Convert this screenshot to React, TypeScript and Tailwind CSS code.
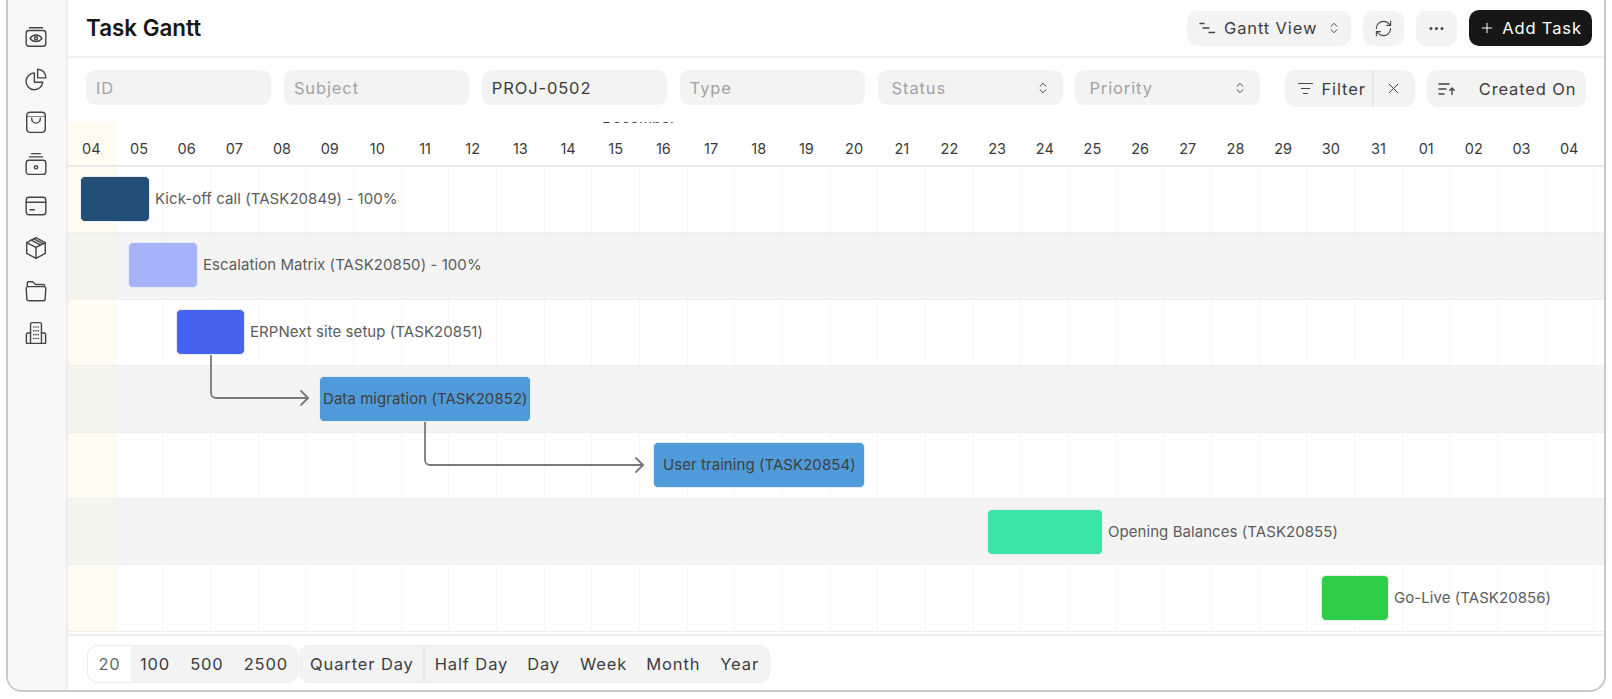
import { ChevronsUpDown, RefreshCw, Ellipsis, Plus, X, ListFilter } from 'lucide-react';

const dates = ['04','05','06','07','08','09','10','11','12','13','14','15','16','17','18','19','20','21','22','23','24','25','26','27','28','29','30','31','01','02','03','04',''];

function Icon({ children }: { children: React.ReactNode }) {
  return (
    <svg width="24" height="24" viewBox="0 0 22 22" fill="none" stroke="#454545" strokeWidth="1.3" strokeLinecap="round" strokeLinejoin="round">
      {children}
    </svg>
  );
}

const sideIcons = [
  <Icon key="eye">
    <path d="M5 2.500h12" />
    <rect x="2" y="5" width="18" height="14.500" rx="2.500" />
    <path d="M5.500 12.200c2.800-4 8.200-4 11 0c-2.800 4-8.200 4-11 0z" />
    <circle cx="11" cy="12.200" r="1.400" />
  </Icon>,
  <Icon key="pie">
    <path d="M9.500 5.500a7.700 7.700 0 1 0 7.700 8.500h-7.700z" />
    <path d="M12.500 2a7.500 7.500 0 0 1 7.500 8h-7.500z" />
  </Icon>,
  <Icon key="bag">
    <rect x="2.500" y="2" width="17" height="18.500" rx="3" />
    <path d="M7 7.500c0 6 8 6 8 0" />
    <path d="M2.500 6h17" strokeWidth="0.6" />
  </Icon>,
  <Icon key="stack">
    <path d="M7 1.500h8" />
    <path d="M5 4.500h12" />
    <rect x="2" y="7.500" width="18" height="13" rx="2.500" />
    <circle cx="11" cy="14" r="1.500" />
  </Icon>,
  <Icon key="card">
    <rect x="2" y="3" width="18" height="16" rx="2.500" />
    <path d="M2 7.500h18" />
    <path d="M5.500 14.500h4" />
  </Icon>,
  <Icon key="box">
    <path d="M11 1.500l8.500 4.500v10L11 20.500L2.500 16V6z" />
    <path d="M2.500 6L11 10.500L19.500 6" />
    <path d="M11 10.500v10" />
    <path d="M6.500 3.700l8.500 4.500" />
    <path d="M9 2.600l8.500 4.500" />
  </Icon>,
  <Icon key="folder">
    <path d="M3 6.500V3.500c0-.6.400-1 1-1h4l2.500 2.500h7c1 0 1.500.5 1.500 1.500" />
    <path d="M2 9c0-1.200.8-2 2-2h14c1.200 0 2 .8 2 2l-.6 9c0 1.200-.8 2-2 2H4.600c-1.200 0-2-.8-2-2z" />
  </Icon>,
  <Icon key="building">
    <path d="M6 20.500V3c0-1 .6-1.500 1.500-1.500h7c.9 0 1.500.5 1.500 1.500v17.500" />
    <path d="M6 11H3.500c-.8 0-1.300.5-1.300 1.300v8.200h17.600v-8.200c0-.8-.5-1.300-1.300-1.300H16" />
    <path d="M9 5.500h.01M13 5.500h.01M9 9h.01M13 9h.01M9 12.500h.01M13 12.500h.01M9 16h.01M13 16h.01M11 5.500h.01M11 9h.01M11 12.500h.01M11 16h.01" strokeWidth="1.500" />
  </Icon>,
];

function Field({ label, value, select }: { label?: string; value?: string; select?: boolean }) {
  return (
    <div className="flex h-[35px] w-[185px] shrink-0 items-center justify-between rounded-[9px] bg-[#f3f3f3] pl-[10px] pr-[13px]">
      {value ? <span className="text-[#3d3d3d]">{value}</span> : <span className={select ? 'pl-[4px] text-[#a3a3a3]' : 'text-[#a3a3a3]'}>{label}</span>}
      {select && <ChevronsUpDown size={14} color="#444" strokeWidth={1.7} />}
    </div>
  );
}

const rows = [0, 1, 2, 3, 4, 5, 6];

const bars = [
  { pos: 'left-[12px] top-[54px]', fill: 'w-[70px] bg-[#224e78]', text: 'Kick-off call (TASK20849) - 100%' },
  { pos: 'left-[60px] top-[120px]', fill: 'w-[70px] bg-[#a6b3fa]', text: 'Escalation Matrix (TASK20850) - 100%' },
  { pos: 'left-[108px] top-[187px]', fill: 'w-[69px] bg-[#4763f0]', text: 'ERPNext site setup (TASK20851)' },
  { pos: 'left-[251px] top-[254px]', fill: 'w-[212px] bg-[#4f9bd9] pl-[3px]', inner: 'Data migration (TASK20852)' },
  { pos: 'left-[585px] top-[320px]', fill: 'w-[212px] bg-[#4f9bd9] pl-[9px]', inner: 'User training (TASK20854)' },
  { pos: 'left-[919px] top-[387px]', fill: 'w-[116px] bg-[#3ae6a6]', text: 'Opening Balances (TASK20855)' },
  { pos: 'left-[1253px] top-[453px]', fill: 'w-[68px] bg-[#2ecf46]', text: 'Go-Live (TASK20856)' },
];

export default function App() {
  return (
    <div className="h-[699px] w-[1612px] overflow-hidden bg-white font-['Inter',sans-serif] text-[16.5px] leading-[24px] tracking-[0.053em] text-[#3d3d3d]">
      <div className="mx-[6px] flex h-[692px] overflow-hidden rounded-b-[16px] border-x-2 border-b-2 border-[#c9c9c9]">
        <aside className="flex w-[60px] shrink-0 flex-col items-center gap-[18.3px] border-r-2 border-[#ececec] bg-[#f8f8f8] pr-[3px] pt-[25px]">
          {sideIcons}
        </aside>

        <main className="flex min-w-0 flex-1 flex-col">
          <header className="flex h-[58px] shrink-0 items-center justify-between border-b-2 border-[#f1f1f1] pl-[18px] pr-[12px]">
            <h1 className="text-[22.4px] font-semibold tracking-normal text-[#171717]">Task Gantt</h1>
            <div className="flex items-center gap-[12px]">
              <button className="flex h-[35px] w-[164px] items-center rounded-[10px] bg-[#f3f3f3] pl-[12px]">
                <svg width="18" height="14" viewBox="0 0 18 14" fill="none" stroke="#444" strokeWidth="1.400" strokeLinecap="round">
                  <path d="M1 2.500h4M4 7h6M10 11.500h5.500" />
                </svg>
                <span className="ml-[7px]">Gantt View</span>
                <ChevronsUpDown size={14} color="#444" strokeWidth={1.700} className="ml-[10px]" />
              </button>
              <button className="flex h-[35px] w-[41px] items-center justify-center rounded-[10px] bg-[#f3f3f3]">
                <RefreshCw size={19} color="#444" strokeWidth={1.400} />
              </button>
              <button className="flex h-[35px] w-[41px] items-center justify-center rounded-[10px] bg-[#f3f3f3]">
                <Ellipsis size={19} color="#444" strokeWidth={1.800} />
              </button>
              <button className="flex h-[36px] w-[123px] items-center justify-center gap-[7px] rounded-[10px] bg-[#171717] text-white">
                <Plus size={16} strokeWidth={1.500} />
                <span>Add Task</span>
              </button>
            </div>
          </header>

          <div className="flex h-[64px] shrink-0 items-start pl-[18px] pt-[12px]">
            <div className="flex gap-[12.9px]">
              <Field label="ID" />
              <Field label="Subject" />
              <Field value="PROJ-0502" />
              <Field label="Type" />
              <Field label="Status" select />
              <Field label="Priority" select />
            </div>
            <div className="ml-[25px] flex h-[37px] w-[130px] items-center rounded-[10px] bg-[#f3f3f3]">
              <div className="flex h-full w-[89px] items-center gap-[7px] border-r-2 border-[#e8e8e8] pl-[12px]">
                <ListFilter size={17} color="#444" strokeWidth={1.400} />
                <span>Filter</span>
              </div>
              <X size={17} color="#444" strokeWidth={1.400} className="ml-[11px]" />
            </div>
            <div className="ml-[12px] flex h-[37px] w-[159px] items-center justify-between rounded-[10px] bg-[#f3f3f3] pl-[11px] pr-[10px]">
              <svg width="18" height="14" viewBox="0 0 18 14" fill="none" stroke="#444" strokeWidth="1.400" strokeLinecap="round" strokeLinejoin="round">
                <path d="M1 2h10M1 7h7M1 12h5" />
                <path d="M14 12.500V6M11.800 8.200L14 6l2.200 2.200" />
              </svg>
              <span>Created On</span>
            </div>
          </div>

          <section className="relative min-h-0 flex-1 overflow-hidden">
            <span className="absolute left-[534px] top-[-15px] text-[15px] leading-[21px] tracking-normal text-[#3d3d3d]">December</span>
            <div className="flex h-[45px] border-b-2 border-[#e9e9e9] text-[14.500px] tracking-normal text-[#3a3a3a]">
              {dates.map((d, i) => (
                <div key={i} className={`w-[47.680px] shrink-0 pr-[1px] pt-[17px] text-center leading-[20px] ${i === 0 ? 'bg-[#fffdf2]' : ''}`}>
                  {d}
                </div>
              ))}
            </div>
            {rows.map((r) => (
              <div key={r} className={`flex h-[66.400px] border-b border-[#eeeeee] ${r % 2 ? 'bg-[#f4f4f4]' : 'bg-white'}`}>
                {dates.map((_, i) => (
                  <div
                    key={i}
                    className={`w-[47.680px] shrink-0 border-r ${r % 2 ? 'border-[#f2f2f2]' : 'border-[#f7f7f7]'} ${i === 0 ? (r % 2 ? 'bg-[#f6f5ed]' : 'bg-[#fffdf2]') : ''}`}
                  />
                ))}
              </div>
            ))}

            <svg className="absolute left-0 top-0" width="700" height="400" fill="none" stroke="#7a7a7a" strokeWidth="1.800" strokeLinecap="round" strokeLinejoin="round">
              <path d="M143 231v40a5 5 0 0 0 5 5h92" />
              <path d="M233 269l7 7l-7 7" />
              <path d="M357 298v40a5 5 0 0 0 5 5h213" />
              <path d="M568 336l7 7l-7 7" />
            </svg>

            {bars.map((b) => (
              <div key={b.pos} className={`absolute flex h-[46px] items-center text-[15px] tracking-[0.004em] ${b.pos}`}>
                <div className={`flex h-[46px] items-center whitespace-nowrap rounded-[5px] border border-[#e9ecf2] text-[#3f3f3f] ${b.fill}`}>
                  {b.inner}
                </div>
                {b.text && <span className="ml-[5px] whitespace-nowrap text-[#5c5c5c]">{b.text}</span>}
              </div>
            ))}
          </section>

          <footer className="flex h-[56px] shrink-0 items-start border-t-2 border-[#eeeeee] pl-[19px] pt-[9px]">
            <div className="flex h-[38px] items-center rounded-[10px] border border-[#ececec] bg-[#f3f3f3]">
              <div className="flex h-full w-[43px] items-center justify-center rounded-l-[10px] bg-white text-[#6a6a6a]">20</div>
              <span className="ml-[9px]">100</span>
              <span className="ml-[20px]">500</span>
              <span className="ml-[20px] mr-[9px]">2500</span>
            </div>
            <div className="ml-[1px] flex h-[38px] items-center rounded-[10px] border border-[#ececec] bg-[#f3f3f3]">
              <span className="ml-[10px]">Quarter Day</span>
              <span className="ml-[9px] h-full border-l-2 border-[#e6e6e6]" />
              <span className="ml-[10px]">Half Day</span>
              <span className="ml-[19px]">Day</span>
              <span className="ml-[20px]">Week</span>
              <span className="ml-[19px]">Month</span>
              <span className="ml-[20px] mr-[10px]">Year</span>
            </div>
          </footer>
        </main>
      </div>
    </div>
  );
}
